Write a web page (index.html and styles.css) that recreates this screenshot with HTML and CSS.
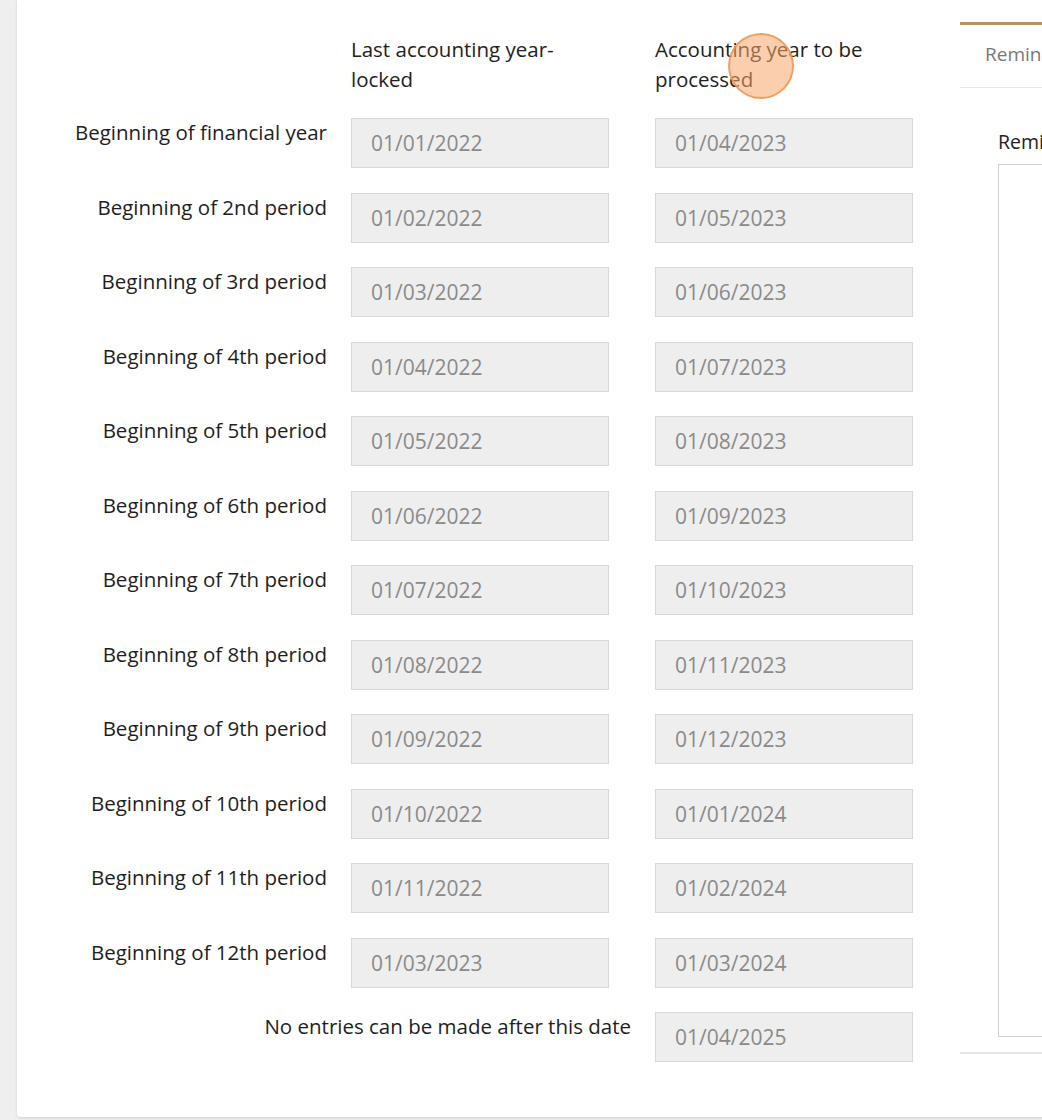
FILE: index.html
```html
<!DOCTYPE html>
<html lang="en">
<head>
<meta charset="utf-8">
<title>Accounting periods</title>
<link rel="stylesheet" href="styles.css">
</head>
<body>
<div class="page">
  <div class="card">
    <div class="form">
      <div class="head-spacer"></div>
      <div class="col-head">Last accounting year-locked</div>
      <div class="col-head">Accounting year to be processed</div>

      <div class="label">Beginning of financial year</div>
      <div class="field">01/01/2022</div>
      <div class="field">01/04/2023</div>

      <div class="label">Beginning of 2nd period</div>
      <div class="field">01/02/2022</div>
      <div class="field">01/05/2023</div>

      <div class="label">Beginning of 3rd period</div>
      <div class="field">01/03/2022</div>
      <div class="field">01/06/2023</div>

      <div class="label">Beginning of 4th period</div>
      <div class="field">01/04/2022</div>
      <div class="field">01/07/2023</div>

      <div class="label">Beginning of 5th period</div>
      <div class="field">01/05/2022</div>
      <div class="field">01/08/2023</div>

      <div class="label">Beginning of 6th period</div>
      <div class="field">01/06/2022</div>
      <div class="field">01/09/2023</div>

      <div class="label">Beginning of 7th period</div>
      <div class="field">01/07/2022</div>
      <div class="field">01/10/2023</div>

      <div class="label">Beginning of 8th period</div>
      <div class="field">01/08/2022</div>
      <div class="field">01/11/2023</div>

      <div class="label">Beginning of 9th period</div>
      <div class="field">01/09/2022</div>
      <div class="field">01/12/2023</div>

      <div class="label">Beginning of 10th period</div>
      <div class="field">01/10/2022</div>
      <div class="field">01/01/2024</div>

      <div class="label">Beginning of 11th period</div>
      <div class="field">01/11/2022</div>
      <div class="field">01/02/2024</div>

      <div class="label">Beginning of 12th period</div>
      <div class="field">01/03/2023</div>
      <div class="field">01/03/2024</div>

      <div class="label label-wide">No entries can be made after this date</div>
      <div class="field">01/04/2025</div>
    </div>

    <div class="side">
      <div class="tabs">
        <div class="tab">Reminders</div>
      </div>
      <div class="side-body">
        <div class="side-label">Reminders</div>
        <div class="textarea"></div>
      </div>
    </div>
  </div>
  <div class="click-marker"></div>
</div>
</body>
</html>
```

FILE: styles.css
```css
html, body {
  margin: 0;
  padding: 0;
  background: #efefef;
  overflow: hidden;
  width: 1042px;
  height: 1120px;
}

.page {
  position: relative;
  padding-left: 17px;
  font-family: "Open Sans", "Liberation Sans", sans-serif;
}

.card {
  display: flex;
  align-items: flex-start;
  width: 1300px;
  background: #ffffff;
  border-radius: 0 0 0 4px;
  box-shadow: 0 1px 3px rgba(0, 0, 0, 0.12);
  padding: 33.5px 0 55px 23px;
  box-sizing: border-box;
}

.form {
  display: grid;
  grid-template-columns: 311px 304px 258px;
  row-gap: 24.5px;
  flex: none;
}

.col-head {
  font-size: 20.5px;
  line-height: 30px;
  color: #222;
  max-width: 258px;
  height: 60px;
}

.label {
  font-size: 20.5px;
  line-height: 28px;
  color: #1e1e1e;
  text-align: right;
  padding-right: 24px;
}

.label-wide {
  grid-column: 1 / 3;
}

.field {
  width: 258px;
  height: 50px;
  box-sizing: border-box;
  background: #eeeeee;
  border: 1px solid #d8d8d8;
  color: #8a8a8a;
  font-size: 21px;
  line-height: 48px;
  padding-left: 19px;
}

.side {
  margin-left: 47px;
  margin-top: -11.5px;
  width: 320px;
  flex: none;
  border-bottom: 2px solid #e6e6e6;
}

.tabs {
  border-top: 3px solid #b8925f;
  border-bottom: 1px solid #e8e8e8;
  height: 66px;
  box-sizing: border-box;
}

.tab {
  font-size: 19px;
  line-height: 58px;
  color: #777;
  padding-left: 25px;
}

.side-body {
  padding: 39px 0 15px 38px;
}

.side-label {
  font-size: 19.5px;
  line-height: 30px;
  color: #222;
  margin-bottom: 7px;
}

.textarea {
  height: 871px;
  border: 1px solid #d0d0d0;
  background: #fff;
}

.click-marker {
  position: absolute;
  left: 728px;
  top: 33px;
  width: 62px;
  height: 62px;
  border-radius: 50%;
  background: rgba(248, 168, 105, 0.55);
  border: 2px solid rgba(240, 150, 80, 0.85);
}
```
